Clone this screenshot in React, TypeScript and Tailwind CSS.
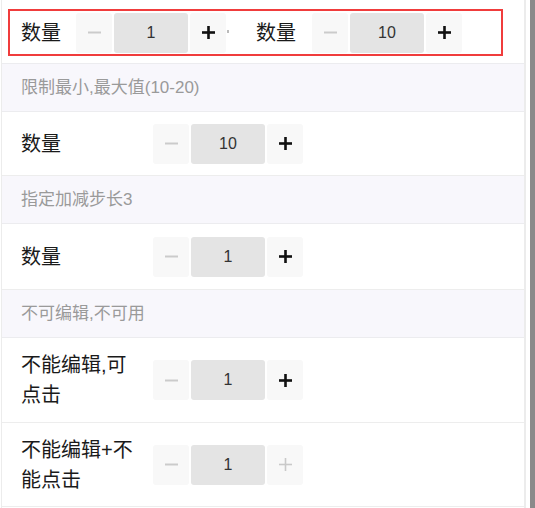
import React from "react";

const FONT = { fontFamily: '"Liberation Sans", "Noto Sans CJK SC", sans-serif' };

function Minus({ color }: { color: string }) {
  return (
    <svg width="13" height="13" viewBox="0 0 13 13">
      <rect x="0" y="5.5" width="13" height="2" fill={color} />
    </svg>
  );
}

function Plus({ color, bold }: { color: string; bold: boolean }) {
  const t = bold ? 2.6 : 1.6;
  const o = (13 - t) / 2;
  return (
    <svg width="13" height="13" viewBox="0 0 13 13">
      <rect x="0" y={o} width="13" height={t} fill={color} />
      <rect x={o} y="0" width={t} height="13" fill={color} />
    </svg>
  );
}

function Stepper({ value, plusDisabled = false }: { value: string; plusDisabled?: boolean }) {
  return (
    <div className="flex h-[40px] gap-[2px]">
      <div className="flex w-[36px] items-center justify-center rounded-[3px] bg-[#f8f8f8]">
        <Minus color="#cbcbcb" />
      </div>
      <div className="flex w-[74px] items-center justify-center rounded-[3px] bg-[#e4e4e4] text-[16px] text-[#333]">
        {value}
      </div>
      <div className="flex w-[36px] items-center justify-center rounded-[3px] bg-[#f8f8f8]">
        <Plus color={plusDisabled ? "#c9c9c9" : "#111"} bold={!plusDisabled} />
      </div>
    </div>
  );
}

function Header({ text }: { text: string }) {
  return (
    <div className="flex h-[48px] items-center border-b border-[#ececef] bg-[#f8f7fc] pl-[19px] text-[17px] text-[#9a9a9a]">
      {text}
    </div>
  );
}

function Row({ label, value, h, plusDisabled }: { label: string; value: string; h: string; plusDisabled?: boolean }) {
  return (
    <div className={`flex items-center border-b border-[#ededed] pl-[19px] ${h}`}>
      <div className="mr-[12px] w-[120px] text-[20px] leading-[30px] text-[#1a1a1a]">{label}</div>
      <Stepper value={value} plusDisabled={plusDisabled} />
    </div>
  );
}

export default function App() {
  return (
    <div className="flex h-[508px] w-[535px] overflow-hidden bg-white" style={FONT}>
      <div className="w-[1px]" />
      <div className="flex w-[525px] flex-col border-l border-r-2 border-[#ececec]">
        <div className="h-[64px] border-b border-[#ececef] pl-[6px] pt-[9px]">
          <div className="flex h-[47px] w-[495px] items-center border-2 border-[#f03c3c] pl-[11px]">
            <div className="w-[55px] text-[20px] text-[#1a1a1a]">数量</div>
            <Stepper value="1" />
            <div className="ml-[1px] mb-[3px] h-[3px] w-[2px] bg-[#bbb]" />
            <div className="ml-[27px] w-[56px] text-[20px] text-[#1a1a1a]">数量</div>
            <Stepper value="10" />
          </div>
        </div>
        <Header text="限制最小,最大值(10-20)" />
        <Row label="数量" value="10" h="h-[64px]" />
        <Header text="指定加减步长3" />
        <Row label="数量" value="1" h="h-[66px]" />
        <Header text="不可编辑,不可用" />
        <Row label="不能编辑,可点击" value="1" h="h-[85px]" />
        <Row label="不能编辑+不能点击" value="1" h="h-[84px]" plusDisabled />
      </div>
      <div className="flex-1" />
      <div className="w-[5px] bg-[#8a8a8a]" />
    </div>
  );
}
